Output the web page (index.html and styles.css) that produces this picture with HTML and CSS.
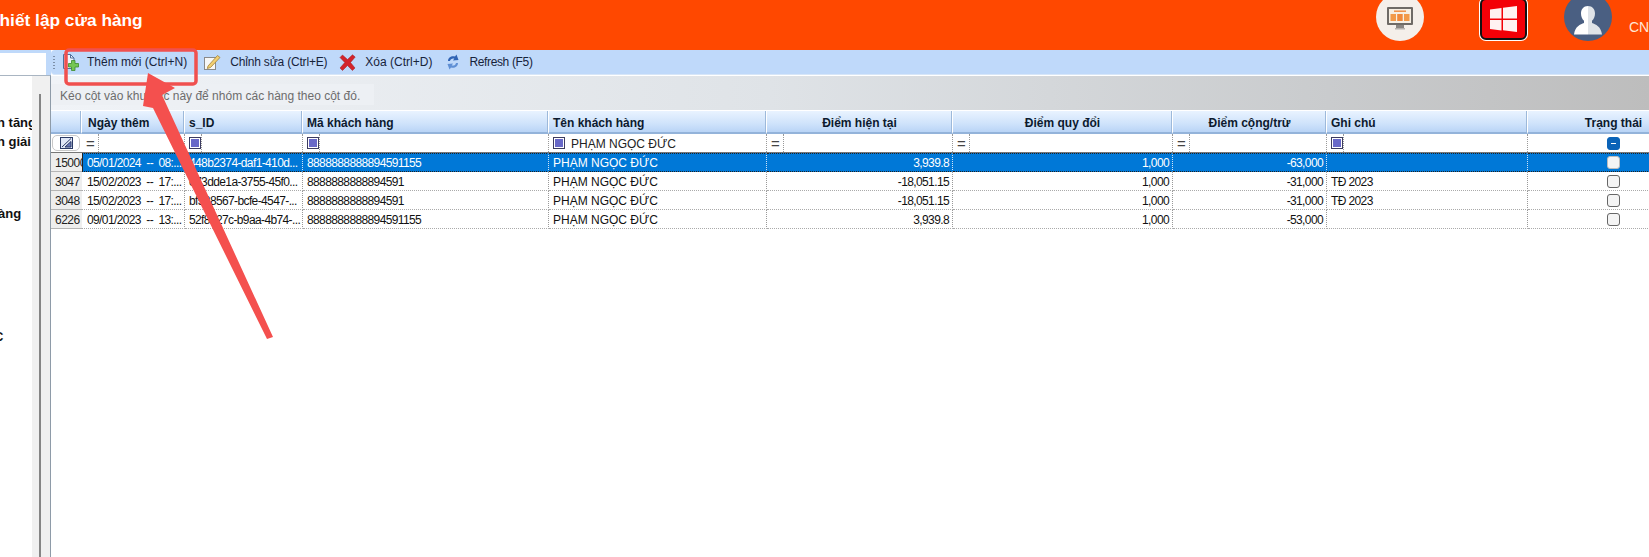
FILE: index.html
```html
<!DOCTYPE html>
<html lang="vi">
<head>
<meta charset="utf-8">
<title>Thiết lập cửa hàng</title>
<link rel="stylesheet" href="styles.css">
</head>
<body>
<div class="app">
  <header class="topbar">
    <h1 class="title">Thiết lập cửa hàng</h1>
    <div class="top-tools">
      <span class="round monitor">
        <svg width="28" height="24" viewBox="0 0 28 24"><rect x="1" y="0" width="26" height="18" rx="1" fill="#6e6a66"/><rect x="3" y="2" width="22" height="14" fill="#f6efe4"/><rect x="8" y="3.500" width="12" height="1.400" fill="#f08a3c"/><rect x="4.500" y="7" width="5.500" height="7" fill="#f29a4a"/><rect x="11.200" y="7" width="5.500" height="7" fill="#f08a3c"/><rect x="18" y="7" width="5.500" height="7" fill="#f29a4a"/><rect x="10" y="18" width="8" height="3" fill="#8a8683"/><rect x="9" y="21" width="10" height="1.500" fill="#b5b1ad"/></svg>
      </span>
      <span class="tile">
        <svg width="27" height="26" viewBox="0 0 27 26"><path d="M0 3.500 11.500 2v10.500H0zM13 1.800 27 0v12.500H13zM0 14h11.500v10.500L0 23zM13 14h14v12l-14-1.700z" fill="#fff" opacity=".95"/></svg>
      </span>
      <span class="round avatar">
        <svg width="28" height="30" viewBox="0 0 28 30"><path d="M14 1c4.500 0 7 3.300 7 7.500 0 3.200-1.300 5.800-3 7.200v2.300c3.500 1.400 9 3.200 10 11.500H14z" fill="#dfe3e8"/><path d="M14 1c-4.500 0-7 3.300-7 7.500 0 3.200 1.300 5.800 3 7.200v2.300C6.500 19.400 1 21.200 0 29.500h14z" fill="#fff"/></svg>
      </span>
      <span class="store-code">CN: 01</span>
    </div>
  </header>

  <div class="workspace">
    <aside class="side">
      <div class="search"><div class="search-box"></div></div>
      <div class="side-panel">
        <div class="side-text">
          <p class="side-line first">n tăng</p>
          <p class="side-line second">n giải</p>
          <p class="side-line third">àng</p>
          <p class="side-line fourth">C</p>
        </div>
        <div class="side-track"><div class="side-thumb"></div></div>
      </div>
    </aside>

    <main class="main">
      <div class="toolbar">
        <span class="grip"></span>
        <button class="tool tool-add">
          <svg width="18" height="17" viewBox="0 0 18 17"><path d="M1.500 .500h7l3.500 3.500v10.500H1.500z" fill="#eef5fd" stroke="#4f6f9c"/><path d="M8.500 .500v3.500H12" fill="none" stroke="#4f6f9c"/><path d="M9.500 6.500h3.500v3H16.500v3.500H13v3.500H9.500V13H6.500V9.500h3z" fill="#74c653" stroke="#3c8c2c" stroke-width=".8"/></svg>
          <span>Thêm mới (Ctrl+N)</span>
        </button>
        <button class="tool tool-edit">
          <svg width="17" height="16" viewBox="0 0 17 16"><rect x=".5" y="3.500" width="11" height="12" fill="#f7f7f7" stroke="#8a8a8a"/><path d="M4 12 13.500 1.500l2.500 2L6.500 13.500l-3.200 1z" fill="#f2cf72" stroke="#a0813a" stroke-width=".8"/></svg>
          <span>Chỉnh sửa (Ctrl+E)</span>
        </button>
        <button class="tool tool-del">
          <svg width="17" height="17" viewBox="0 0 17 17"><path d="M1 3.500 3.500 1 8.500 5.500 13.500.800 16.200 3 11.500 8.500 16 14l-2.600 2.500-4.900-5-5 5L1 14l4.800-5.500z" fill="#d3242c" stroke="#9c1f22" stroke-width=".5"/></svg>
          <span>Xóa (Ctrl+D)</span>
        </button>
        <button class="tool tool-refresh">
          <svg width="14" height="16" viewBox="0 0 14 16"><path d="M2 7C2 3.500 5.500 1.500 9 2.500L10.500.500 12.500 6 7 6.500 8.300 4.600C6.300 4 4.300 5 4 7z" fill="#2f63b4"/><path d="M12 9c0 3.500-3.500 5.500-7 4.500L3.500 15.500 1.500 10 7 9.500 5.700 11.400C7.700 12 9.700 11 10 9z" fill="#5f8fd4"/></svg>
          <span>Refresh (F5)</span>
        </button>
      </div>

      <div class="group-panel">
        <div class="group-hint">Kéo cột vào khu vực này để nhóm các hàng theo cột đó.</div>
      </div>

      <div class="table">
        <div class="row head">
          <div class="hcell"></div>
          <div class="hcell indent">Ngày thêm</div>
          <div class="hcell">s_ID</div>
          <div class="hcell">Mã khách hàng</div>
          <div class="hcell">Tên khách hàng</div>
          <div class="hcell center">Điểm hiện tại</div>
          <div class="hcell center">Điểm quy đổi</div>
          <div class="hcell center">Điểm cộng/trừ</div>
          <div class="hcell">Ghi chú</div>
          <div class="hcell center">Trạng thái</div>
        </div>

        <div class="row filter">
          <div class="fhead"><span class="clear-filter"><svg width="13" height="12" viewBox="0 0 13 12"><rect x=".5" y=".5" width="12" height="11" fill="#dfe6f6" stroke="#2b3a66"/><path d="M2 10 11 1.500M5 10l6-5.500V10z" stroke="#2b3a66" fill="#6a78b8"/></svg></span></div>
          <div class="fcell"><span class="op eq">=</span></div>
          <div class="fcell"><span class="op"><i class="sq"></i></span></div>
          <div class="fcell"><span class="op"><i class="sq"></i></span></div>
          <div class="fcell"><span class="op plain"><i class="sq"></i></span><span class="fvalue">PHẠM NGỌC ĐỨC</span></div>
          <div class="fcell"><span class="op eq">=</span></div>
          <div class="fcell"><span class="op eq">=</span></div>
          <div class="fcell"><span class="op eq">=</span></div>
          <div class="fcell"><span class="op"><i class="sq"></i></span></div>
          <div class="fcell center"><span class="check mixed"></span></div>
        </div>

        <div class="row data selected">
          <div class="rhead">15000</div>
          <div class="cell pre tight">05/01/2024  --  08:...</div>
          <div class="cell tight">448b2374-daf1-410d...</div>
          <div class="cell tight">8888888888894591155</div>
          <div class="cell">PHẠM NGỌC ĐỨC</div>
          <div class="cell num tight">3,939.8</div>
          <div class="cell num tight">1,000</div>
          <div class="cell num tight">-63,000</div>
          <div class="cell"></div>
          <div class="cell center"><span class="check"></span></div>
        </div>
        <div class="row data">
          <div class="rhead">3047</div>
          <div class="cell pre tight">15/02/2023  --  17:...</div>
          <div class="cell tight">e73dde1a-3755-45f0...</div>
          <div class="cell tight">8888888888894591</div>
          <div class="cell">PHẠM NGỌC ĐỨC</div>
          <div class="cell num tight">-18,051.15</div>
          <div class="cell num tight">1,000</div>
          <div class="cell num tight">-31,000</div>
          <div class="cell tight">TĐ 2023</div>
          <div class="cell center"><span class="check"></span></div>
        </div>
        <div class="row data">
          <div class="rhead">3048</div>
          <div class="cell pre tight">15/02/2023  --  17:...</div>
          <div class="cell tight">bf528567-bcfe-4547-...</div>
          <div class="cell tight">8888888888894591</div>
          <div class="cell">PHẠM NGỌC ĐỨC</div>
          <div class="cell num tight">-18,051.15</div>
          <div class="cell num tight">1,000</div>
          <div class="cell num tight">-31,000</div>
          <div class="cell tight">TĐ 2023</div>
          <div class="cell center"><span class="check"></span></div>
        </div>
        <div class="row data">
          <div class="rhead">6226</div>
          <div class="cell pre tight">09/01/2023  --  13:...</div>
          <div class="cell tight">52f8a27c-b9aa-4b74-...</div>
          <div class="cell tight">8888888888894591155</div>
          <div class="cell">PHẠM NGỌC ĐỨC</div>
          <div class="cell num tight">3,939.8</div>
          <div class="cell num tight">1,000</div>
          <div class="cell num tight">-53,000</div>
          <div class="cell"></div>
          <div class="cell center"><span class="check"></span></div>
        </div>
      </div>
    </main>
  </div>

  <svg class="annotation" width="1649" height="557" viewBox="0 0 1649 557">
    <rect x="66" y="50" width="130" height="34" rx="3" fill="none" stroke="#f0504f" stroke-width="3.500"/>
    <path d="M148 73 175 88 162 95 273 337 267 339 153 108 143 106z" fill="#f4504e"/>
  </svg>
</div>
</body>
</html>
```

FILE: styles.css
```css
* { box-sizing: border-box; }
html, body { margin: 0; height: 100%; overflow: hidden; background: #fff; }
body { font-family: "Liberation Sans", Arial, sans-serif; font-size: 12px; color: #111; }

.app { position: relative; display: flex; flex-direction: column; width: 1649px; height: 557px; overflow: hidden; }

/* top bar */
.topbar { display: flex; flex: 0 0 50px; height: 50px; background: #ff4800; overflow: hidden; }
.title { flex: 1; margin: 8px 0 0 -11px; font-size: 17.3px; line-height: 24px; font-weight: 700; color: #fff; }
.top-tools { display: flex; flex: 0 0 273px; width: 273px; align-items: flex-start; overflow: hidden; }
.round { display: flex; flex: 0 0 48px; width: 48px; height: 48px; margin-top: -7px; border-radius: 50%; align-items: center; justify-content: center; }
.monitor { background: #f4efea; }
.monitor svg { margin-top: 3px; }
.avatar { margin-left: 37px; background: #4a5f82; }
.avatar svg { margin-top: 6px; }
.tile { display: flex; flex: 0 0 47px; height: 42px; margin: -2px 0 0 56px; padding-top: 6px; justify-content: center; align-items: flex-start; background: #f30007; border: 2px solid #111; border-radius: 6px; box-shadow: 0 0 0 1px #fff; }
.store-code { margin: 18px 0 0 17px; font-size: 14px; line-height: 18px; color: #ffe6d5; white-space: nowrap; }

/* layout */
.workspace { display: flex; flex: 1; min-height: 0; }
.side { display: flex; flex: 0 0 51px; flex-direction: column; }
.search { flex: 0 0 25px; padding-top: 3px; background: #bfd9fa; }
.search-box { width: 46px; height: 22px; background: #fff; }
.side-panel { display: flex; flex: 1; border-top: 1px solid #a9b5c2; border-right: 1px solid #8e9ba8; }
.side-text { flex: 0 0 32px; width: 32px; overflow: hidden; }
.side-line { margin: 0; font-size: 13px; line-height: 19px; font-weight: 700; color: #111; white-space: nowrap; }
.side-line.first { margin: 37px 0 0 -3px; }
.side-line.second { margin-left: -3px; }
.side-line.third { margin: 53px 0 0 -2px; }
.side-line.fourth { margin: 104px 0 0 -6px; }
.side-track { flex: 1; background: #f0f0f0; }
.side-thumb { width: 2px; height: calc(100% - 18px); margin: 18px 0 0 7px; background: #858585; }

/* toolbar */
.main { display: flex; flex: 1; min-width: 0; flex-direction: column; }
.toolbar { display: flex; flex: 0 0 25px; align-items: center; background: #bfd9fa; border-radius: 4px 0 0 4px; border-bottom: 1px solid #d7e6f8; }
.grip { flex: 0 0 2px; height: 14px; margin: 0 7px 0 2px; background-image: radial-gradient(circle, #7c8fa8 .8px, transparent .9px); background-size: 2px 3px; }
.tool { display: flex; align-items: center; height: 24px; padding: 0; border: 0; background: none; font: inherit; color: #17233a; white-space: nowrap; }
.tool span { display: block; }
.tool-add svg { margin-right: 7px; }
.tool-edit { margin-left: 17px; }
.tool-edit svg { margin-right: 9px; }
.tool-edit span { letter-spacing: -.18px; }
.tool-del { margin-left: 12px; }
.tool-del svg { margin-right: 9px; }
.tool-refresh { margin-left: 14px; }
.tool-refresh svg { margin-right: 9px; }
.tool-refresh span { letter-spacing: -.35px; }

/* group panel */
.group-panel { flex: 0 0 36px; padding-top: 8px; background: linear-gradient(to right, #f0f3f7 0%, #dfe3e7 45%, #c9cbcd 80%, #bdbdbd 100%); border-top: 1px solid #fff; border-bottom: 1px solid #fff; }
.group-hint { width: 323px; height: 21px; padding-left: 9px; line-height: 24px; color: #6c6c6c; background: #edf0f4; white-space: nowrap; }

/* table */
.table { flex: 1; background: #fff; overflow: hidden; }
.row { display: grid; grid-template-columns: 31px 103px 118px 246px 218px 186px 220px 154px 201px 172px; width: 1649px; }
.head { height: 23px; }
.hcell { height: 23px; padding: 2px 0 0 4px; line-height: 21px; font-weight: 700; color: #0d1a2e; background: linear-gradient(to bottom, #e9f3ff 0%, #cfe3fb 60%, #b9d4f6 100%); border-right: 1px solid #fff; box-shadow: inset -1px 0 0 #9db9da; border-bottom: 2px solid #93b3da; white-space: nowrap; overflow: hidden; }
.hcell.indent { padding-left: 6px; }
.hcell.center { padding-left: 0; text-align: center; }

.filter { height: 19px; border-bottom: 1px solid #777; }
.fhead { display: flex; padding: 1px 1px 0 1px; background: #fff; }
.clear-filter { display: flex; width: 28px; height: 16px; align-items: center; justify-content: center; background: #fff; border: 1px solid #c8c8c8; border-radius: 5px; }
.fcell { display: flex; align-items: center; height: 18px; border-right: 1px dotted #999; overflow: hidden; }
.fcell.center { justify-content: center; }
.op { display: flex; flex: 0 0 17px; height: 18px; padding-left: 4px; align-items: center; border-right: 1px dotted #999; }
.op.eq { font-size: 15px; color: #444; }
.op.plain { border-right: 0; }
.sq { display: block; width: 12px; height: 12px; background: #6868c8; border: 1px solid #3c3c60; box-shadow: inset 0 0 0 1px #fff; }
.fvalue { margin: 2px 0 0 5px; color: #222; white-space: nowrap; }

.data { height: 19px; }
.rhead { height: 19px; padding-left: 4px; line-height: 20px; letter-spacing: -.5px; overflow: hidden; color: #222; background: #eee; border-bottom: 1px solid #b5b5b5; }
.cell { height: 19px; padding: 0 3px 0 4px; line-height: 20px; border-right: 1px dotted #999; border-bottom: 1px dotted #aaa; white-space: nowrap; overflow: hidden; }
.tight { letter-spacing: -.62px; }
.cell.pre { white-space: pre; padding-left: 5px; }
.num { text-align: right; }
.cell.center { display: flex; align-items: center; justify-content: center; padding: 0; }
.selected .cell { color: #fff; background: #0078d7; border-top: 1px dotted #222; border-bottom: 1px dotted #222; border-right-color: #cfe3f7; line-height: 18px; }
.selected .cell.pre { box-shadow: inset 1px 0 0 #222; }

.check { display: block; width: 13px; height: 13px; background: #f4f4f4; border: 1px solid #666; border-radius: 3px; }
.selected .check { background: #f4f4f4; border-color: #bbb; }
.check.mixed { position: relative; background: #0a63b8; border-color: #0a63b8; }
.check.mixed::after { content: ""; position: absolute; left: 3px; top: 5px; width: 5px; height: 1px; background: #fff; }

/* annotation drawn over the screenshot */
.annotation { position: absolute; left: 0; top: 0; pointer-events: none; }
```
